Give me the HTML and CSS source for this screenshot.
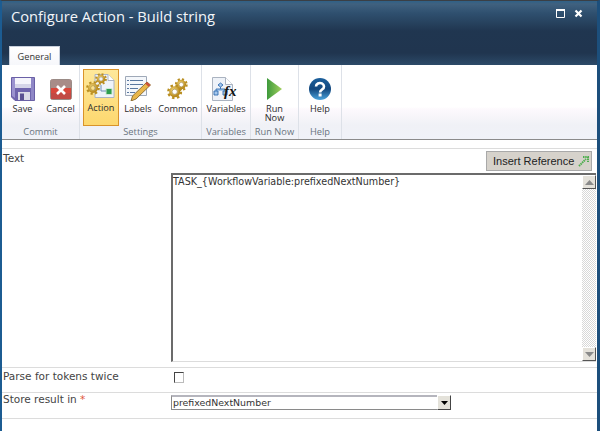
FILE: index.html
```html
<!DOCTYPE html>
<html lang="en">
<head>
<meta charset="utf-8">
<title>Configure Action - Build string</title>
<link rel="stylesheet" href="styles.css">
</head>
<body>
<svg class="defs" width="0" height="0">
  <defs>
    <radialGradient id="gold" cx=".4" cy=".35" r=".7"><stop offset="0" stop-color="#fbe38a"/><stop offset="1" stop-color="#b98a1c"/></radialGradient>
    <symbol id="gear" viewBox="0 0 20 20">
      <circle cx="10" cy="10" r="8.200" fill="none" stroke="#b98f22" stroke-width="3.200" stroke-dasharray="3.200 3.240"/>
      <circle cx="10" cy="10" r="5.400" fill="none" stroke="url(#gold)" stroke-width="3.600"/>
      <circle cx="10" cy="10" r="3.400" fill="none" stroke="#8a6a1a" stroke-width=".7"/>
    </symbol>
  </defs>
</svg>
<div class="window">
  <header class="header">
    <div class="titlebar">
      <h1 class="title">Configure Action - Build string</h1>
      <div class="winctl">
        <svg width="10" height="10" viewBox="0 0 10 10"><path d="M.5 .5h8v8h-8z" fill="none" stroke="#fff"/><path d="M0 0h9v2H0z" fill="#fff"/></svg>
        <svg width="10" height="10" viewBox="0 0 10 10"><path d="M1.500 1.500l6 6M7.500 1.500l-6 6" fill="none" stroke="#fff" stroke-width="2.200"/></svg>
      </div>
    </div>
    <div class="tabs"><span class="tab">General</span></div>
  </header>

  <div class="ribbon">
    <section class="group g-commit">
      <div class="btns">
        <div class="btn b-save">
          <svg class="ico" viewBox="0 0 24 24"><path d="M.5 .5h23v23H4L.5 20z" fill="#6f65ad" stroke="#6a60a6"/><path d="M1 1h3v20L1 19z" fill="#9b93cf"/><path d="M4 1h16v10H4z" fill="#f5f5fb"/><path d="M4 7h16v4H4z" fill="#d5d5e8"/><path d="M20 1h3v22h-3z" fill="#8f87c6"/><path d="M7 15h12v8H7z" fill="#dcdce8"/><path d="M9 16.500h4V23H9z" fill="#5b5292"/></svg>
          <span>Save</span>
        </div>
        <div class="btn b-cancel">
          <svg class="ico" viewBox="0 0 22 21"><rect x=".5" y=".5" width="21" height="20" rx="2" fill="#b8504a" stroke="#9a8b86"/><path d="M1 1h20v8H1z" fill="#a88c88"/><path d="M1 9h20v5H1z" fill="#d8473b"/><path d="M1 14h20v6H1z" fill="#c24a44"/><path d="M7 7l8 8M15 7l-8 8" stroke="#fff" stroke-width="2.600"/></svg>
          <span>Cancel</span>
        </div>
      </div>
      <div class="glabel">Commit</div>
    </section>
    <section class="group g-settings">
      <div class="btns">
        <div class="btn b-action active">
          <svg class="ico" viewBox="0 0 30 26"><path d="M9 1.500h13l6 6v17H9z" fill="#eff3f9" stroke="#aab4c4"/><path d="M22 1.500v6h6" fill="#fff" stroke="#aab4c4"/><path d="M20 15.500h6v6h-6z" fill="#2f9e4f" stroke="#cfe9d5"/><path d="M15 12v6h5" fill="none" stroke="#6f8fb5"/><use href="#gear" x="9" y="0" width="12" height="12"/><use href="#gear" x="0" y="8" width="14" height="14"/></svg>
          <span>Action</span>
        </div>
        <div class="btn b-labels">
          <svg class="ico" viewBox="0 0 26 26"><path d="M.5 1.500h21v19H.5z" fill="#f4f7fb" stroke="#9fa9b8"/><path d="M5 5.500h13M5 9.500h13M5 13.500h8M5 17.500h5M2 5.500h2M2 9.500h2M2 13.500h2M2 17.500h2" stroke="#5a78a0"/><path d="M22 7l3.500 3L11 24l-5 2 1.500-5z" fill="#e8b64a" stroke="#7a5a20" stroke-width=".8"/><path d="M22 7l3.500 3-1.800 1.800-3.500-3z" fill="#c9503c"/></svg>
          <span>Labels</span>
        </div>
        <div class="btn b-common">
          <svg class="ico" viewBox="0 0 20 20"><use href="#gear" x="7" y="0" width="12" height="12"/><use href="#gear" x="0" y="5.500" width="14" height="14"/></svg>
          <span>Common</span>
        </div>
      </div>
      <div class="glabel">Settings</div>
    </section>
    <section class="group g-vars">
      <div class="btns">
        <div class="btn b-vars">
          <svg class="ico" viewBox="0 0 28 24"><path d="M.5 .5h13l7 7v16H.5z" fill="#eef2f8" stroke="#aab3c0"/><path d="M13.500 .5v7h7" fill="#fff" stroke="#aab3c0"/><path d="M6 8l2.500-2L11 8l-2.500 2zM2 14h4v4H2zM11 14h4v4h-4zM4 14v-2h9v2M8.500 10v2" fill="#a5c7ec" stroke="#2f6bb0" stroke-width=".9"/><text class="fx" x="12" y="19">fx</text></svg>
          <span>Variables</span>
        </div>
      </div>
      <div class="glabel">Variables</div>
    </section>
    <section class="group g-run">
      <div class="btns">
        <div class="btn b-run">
          <svg class="ico" viewBox="0 0 15 22"><defs><linearGradient id="run" x1="0" x2="1" y1="0" y2="0"><stop offset="0" stop-color="#3e9a3c"/><stop offset="1" stop-color="#a2d05e"/></linearGradient></defs><path d="M0 0l15 11L0 22z" fill="url(#run)"/></svg>
          <span>Run<br>Now</span>
        </div>
      </div>
      <div class="glabel">Run Now</div>
    </section>
    <section class="group g-help">
      <div class="btns">
        <div class="btn b-help">
          <svg class="ico" viewBox="0 0 22 22"><defs><linearGradient id="hlp" x1="0" x2="0" y1="0" y2="1"><stop offset="0" stop-color="#1b5f9c"/><stop offset=".5" stop-color="#14487e"/><stop offset="1" stop-color="#4aa3dc"/></linearGradient></defs><circle cx="11" cy="11" r="11" fill="url(#hlp)"/><path d="M7 8.500a4 3.500 0 1 1 6.200 2.900c-1.400.9-2.100 1.500-2.100 3" fill="none" stroke="#fff" stroke-width="2.600"/><rect x="9.600" y="15.500" width="3" height="3" fill="#fff"/></svg>
          <span>Help</span>
        </div>
      </div>
      <div class="glabel">Help</div>
    </section>
  </div>

  <div class="spacer"></div>

  <main class="form">
    <div class="row row-text">
      <div class="label">Text</div>
      <div class="field">
        <div class="toolbar">
          <div class="insert"><span>Insert Reference</span>
            <svg width="11" height="11" viewBox="0 0 11 11"><path d="M1 10l7-7M5 1h5v5" fill="none" stroke="#4fae4f" stroke-width="2" stroke-dasharray="1.500 .7"/></svg>
          </div>
        </div>
        <div class="textarea">
          <div class="textvalue">TASK_{WorkflowVariable:prefixedNextNumber}</div>
          <div class="scrollbar">
            <div class="sbtn"><svg width="9" height="5" viewBox="0 0 9 5"><path d="M4.500 0L9 5H0z" fill="#8a8a8a"/></svg></div>
            <div class="strack"></div>
            <div class="sbtn"><svg width="9" height="5" viewBox="0 0 9 5"><path d="M0 0h9L4.500 5z" fill="#8a8a8a"/></svg></div>
          </div>
        </div>
      </div>
    </div>
    <div class="row row-parse">
      <div class="label">Parse for tokens twice</div>
      <div class="field"><span class="check"></span></div>
    </div>
    <div class="row row-store">
      <div class="label">Store result in <span class="req">*</span></div>
      <div class="field">
        <div class="select">
          <span class="selval">prefixedNextNumber</span>
          <span class="selbtn"><svg width="7" height="4" viewBox="0 0 7 4"><path d="M0 0h7L3.500 4z" fill="#000"/></svg></span>
        </div>
      </div>
    </div>
  </main>
</div>
</body>
</html>
```
FILE: styles.css
```css
* { box-sizing: border-box; }
html, body { margin: 0; padding: 0; background: #fff; }
.defs { display: block; height: 0; }
.window {
  width: 600px;
  height: 431px;
  display: flex;
  flex-direction: column;
  overflow: hidden;
  border-left: 2px solid #1c5c92;
  border-right: 3px solid #1c4f7c;
  border-top: 1px solid #3a3f45;
  background: #fff;
  font-family: "DejaVu Sans", sans-serif;
  color: #333;
}
.header {
  height: 64px;
  flex: none;
  display: flex;
  flex-direction: column;
  justify-content: space-between;
  background: linear-gradient(#2f6187 0, #40617f 3px, #2f506f 12px, #203650 30px, #20354f 52px, #2c4a68 64px);
}
.titlebar {
  display: flex;
  justify-content: space-between;
  padding: 5px 13px 0 9px;
}
.title {
  margin: 0;
  font: 400 14.700px/20px "Open Sans", sans-serif;
  color: #f2f6fa;
}
.winctl { display: flex; gap: 8px; padding-top: 3px; }
.tabs { display: flex; padding-left: 7px; height: 19px; }
.tab {
  width: 51px;
  height: 19px;
  background: linear-gradient(#fff, #f6f7fb);
  border: 1px solid #c8d0dc;
  border-bottom: 0;
  text-align: center;
  font: 9.200px/19px "Open Sans", sans-serif;
  color: #333;
}
.ribbon {
  height: 75px;
  flex: none;
  display: flex;
  background: linear-gradient(#fff 0, #fff 42px, #fdf9fd 44px, #f0f1f6 60px, #f0f2f8 75px);
  border-bottom: 1px solid #8b8b8b;
  font-family: "Open Sans", sans-serif;
}
.group {
  display: flex;
  flex-direction: column;
  height: 74px;
  padding-top: 4px;
  border-right: 1px solid #dde1e8;
}
.g-commit { width: 78px; }
.g-settings { width: 122px; }
.g-vars { width: 49px; }
.g-run { width: 48px; }
.g-help { width: 43px; }
.btns { display: flex; height: 56px; }
.btn {
  display: flex;
  flex-direction: column;
  align-items: center;
  padding-top: 6px;
  font-size: 9.200px;
  line-height: 9px;
  text-align: center;
  color: #2d2d2d;
}
.btn span { margin-top: 3px; }
.ico { flex: none; display: block; width: 26px; height: 26px; }
.b-save { width: 37px; margin-left: 2px; }
.b-save .ico { width: 24px; height: 24px; margin: 2px 0 0; }
.b-cancel { width: 37px; }
.b-cancel .ico { width: 22px; height: 21px; margin: 4px 0 1px; }
.g-commit .btns { gap: 1px; }
.b-action { width: 36px; margin-left: 3px; height: 57px; }
.b-action .ico { width: 30px; }
.active { background: linear-gradient(#fee89a, #fdd86f); border: 1px solid #d9932a; padding-top: 3px; }
.active span { margin-top: 4px; }
.b-labels { width: 38px; }
.b-common { width: 42px; }
.b-common .ico { width: 22px; height: 22px; margin: 3px 0 1px; }
.b-vars { width: 49px; }
.b-vars .ico { width: 28px; height: 24px; margin-top: 2px; }
.b-run { width: 48px; }
.b-run .ico { width: 15px; height: 22px; margin: 3px 0 1px; }
.b-help { width: 43px; }
.b-help .ico { width: 22px; height: 22px; margin: 3px 0 1px; }
.fx { font: italic 700 15px "Liberation Serif", serif; fill: #111; }
.glabel {
  text-align: center;
  font-size: 9.300px;
  line-height: 14px;
  color: #6a7480;
}
.spacer {
  height: 9px;
  flex: none;
  background: #fff;
  border-bottom: 1px solid #dcdcdc;
}
.form { font-size: 10.500px; flex: 1; }
.row {
  display: grid;
  grid-template-columns: 169px 1fr;
  border-bottom: 1px solid #dcdcdc;
}
.label { padding: 3px 0 0 1px; line-height: 13px; color: #444; }
.row-text { height: 219px; }
.toolbar { display: flex; justify-content: flex-end; height: 24px; padding: 2px 5px 0 0; }
.insert {
  width: 106px;
  height: 20px;
  background: #d6d2cb;
  border: 1px solid #a9a9a9;
  font: 11px/18px "Liberation Sans", sans-serif;
  color: #222;
  padding-left: 6px;
  display: flex;
  gap: 4px;
  align-items: center;
  white-space: nowrap;
}
.textarea {
  height: 189px;
  display: flex;
  justify-content: space-between;
  margin-right: 1px;
  border-top: 2px solid #6b6b6b;
  border-left: 2px solid #6b6b6b;
  border-bottom: 1px solid #dcdcdc;
}
.textvalue { font-size: 9.600px; line-height: 12px; padding: 1px 0 0 0; color: #333; }
.scrollbar { width: 14px; display: flex; flex-direction: column; }
.sbtn {
  height: 14px;
  flex: none;
  display: flex;
  align-items: center;
  justify-content: center;
  background: #e4e1da;
  border: 1px solid #fff;
  border-right-color: #555;
  border-bottom-color: #555;
}
.strack {
  flex: 1;
  background-color: #f0f0f0;
  background-image: repeating-conic-gradient(#d8d8d8 0 25%, #fff 0 50%);
  background-size: 2px 2px;
}
.row-parse { height: 25px; }
.row-parse .label { padding-top: 2px; }
.check {
  display: block;
  width: 10px;
  height: 11px;
  margin: 4px 0 0 3px;
  border: 1px solid #444;
  border-right-color: #bbb;
  border-bottom-color: #bbb;
  background: #fff;
}
.row-store { height: 26px; }
.row-store .label { padding-top: 0; }
.select {
  width: 280px;
  height: 15px;
  margin-top: 2px;
  display: flex;
  justify-content: space-between;
  border-top: 2px solid #b5b5bd;
  border-left: 1px solid #8a8a8a;
  border-bottom: 1px solid #8a8a8a;
  line-height: 12px;
  font-size: 9.400px;
}
.selval { padding-left: 1px; color: #333; }
.selbtn {
  width: 14px;
  margin-top: -2px;
  height: 15px;
  display: flex;
  align-items: center;
  justify-content: center;
  background: #e4e2da;
  border: 1px solid #fff;
  border-right-color: #444;
  border-bottom-color: #444;
}
.req { color: #e0563a; }
```
